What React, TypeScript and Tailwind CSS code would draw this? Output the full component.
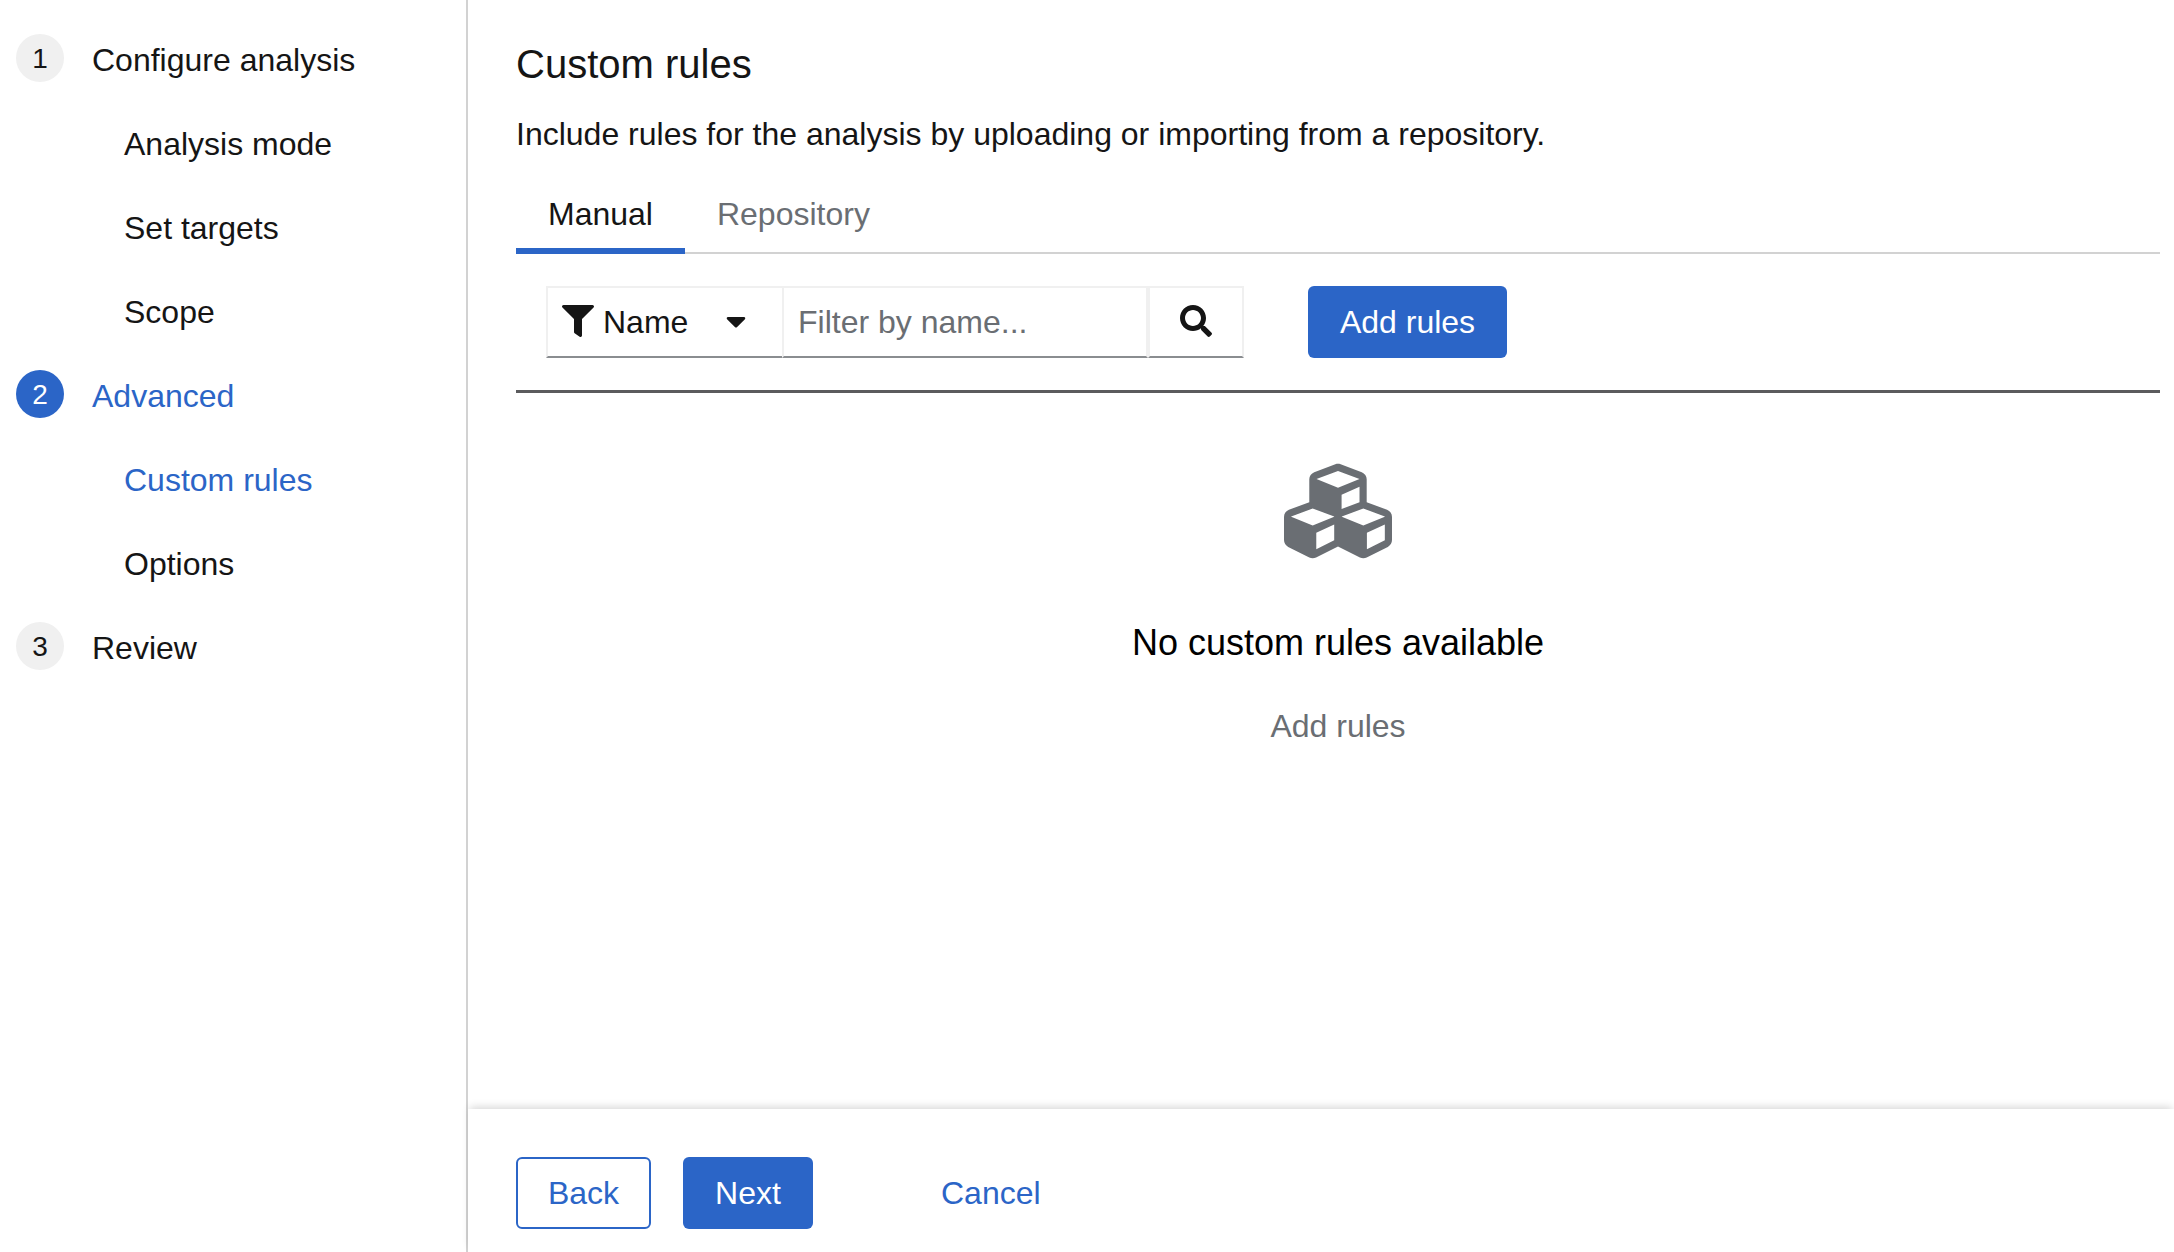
import type { ReactNode } from "react";
import { FaCaretDown, FaCubes, FaFilter, FaSearch } from "react-icons/fa";

function Step({ n, active, children }: { n: number; active?: boolean; children: ReactNode }) {
  return (
    <a className={`flex h-12 items-start ${active ? "text-[#2b65c7]" : "text-[#151515]"}`}>
      <span
        className={`-mt-0.5 mr-7 flex size-12 shrink-0 items-center justify-center rounded-full pt-0.5 text-[28px] leading-[46px] ${
          active ? "bg-[#2b65c7] text-white" : "bg-[#f0f0f0] text-[#151515]"
        }`}
      >
        {n}
      </span>
      {children}
    </a>
  );
}

function SubStep({ active, children }: { active?: boolean; children: ReactNode }) {
  return <a className={`block h-12 pl-[108px] ${active ? "text-[#2b65c7]" : "text-[#151515]"}`}>{children}</a>;
}

export default function App() {
  return (
    <div className="flex h-[1252px] w-[2174px] overflow-hidden bg-white font-['Liberation_Sans',Arial,sans-serif] text-[32px] leading-[48px] text-[#151515]">
      <nav className="flex w-[468px] shrink-0 flex-col gap-9 border-r-2 border-[#d2d2d2] pt-9 pl-4">
        <Step n={1}>Configure analysis</Step>
        <SubStep>Analysis mode</SubStep>
        <SubStep>Set targets</SubStep>
        <SubStep>Scope</SubStep>
        <Step n={2} active>
          Advanced
        </Step>
        <SubStep active>Custom rules</SubStep>
        <SubStep>Options</SubStep>
        <Step n={3}>Review</Step>
      </nav>

      <div className="flex min-w-0 flex-1 flex-col">
        <main className="flex-1 pt-[38px] pr-3.5 pl-12">
          <h1 className="text-[40px] leading-[52px]">Custom rules</h1>
          <p className="mt-5">Include rules for the analysis by uploading or importing from a repository.</p>

          <div className="mt-4 flex h-20 border-b-2 border-[#d2d2d2]">
            <button className="-mb-0.5 h-20 border-b-6 border-[#2b65c7] px-8 pt-4 pb-2.5">Manual</button>
            <button className="h-[78px] px-8 pt-4 pb-3.5 text-[#6a6e73]">Repository</button>
          </div>

          <div className="flex h-[139px] items-start border-b-3 border-[#5b5b5d] pt-8 pl-[30px]">
            <button className="flex h-[72px] w-[236px] items-center border-t-2 border-b-2 border-l-2 border-t-[#f0f0f0] border-b-[#8a8d90] border-l-[#f0f0f0] pl-3.5">
              <FaFilter className="mb-0.5 size-8" />
              <span className="ml-[9px] w-[117px] text-left">Name</span>
              <FaCaretDown className="mb-0.5 size-8" />
            </button>
            <div className="h-[72px] w-[366px] border-2 border-[#f0f0f0] border-b-[#8a8d90] pt-2.5 pl-[14px] text-[#6a6e73]">
              Filter by name...
            </div>
            <button className="flex h-[72px] w-24 items-center justify-center border-2 border-[#f0f0f0] border-b-[#8a8d90]">
              <FaSearch className="mb-0.5 size-8" />
            </button>
            <button className="ml-16 h-[72px] w-[199px] rounded-md bg-[#2b65c7] pb-px text-white">Add rules</button>
          </div>

          <section className="flex flex-col items-center pt-16">
            <FaCubes className="size-[108px] text-[#6a6e73]" />
            <h2 className="mt-[54px] text-4xl leading-[48px] text-black">No custom rules available</h2>
            <p className="mt-[35px] text-[#6a6e73]">Add rules</p>
          </section>
        </main>

        <footer className="flex h-[143px] items-start bg-white pt-12 pl-12 shadow-[0_-4px_8px_-2px_rgba(3,3,3,0.16)]">
          <button className="h-[72px] w-[135px] rounded-md border-2 border-[#2b65c7] text-[#2b65c7]">Back</button>
          <button className="ml-8 h-[72px] w-[130px] rounded-md bg-[#2b65c7] text-white">Next</button>
          <button className="ml-24 h-[72px] px-8 text-[#2b65c7]">Cancel</button>
        </footer>
      </div>
    </div>
  );
}
